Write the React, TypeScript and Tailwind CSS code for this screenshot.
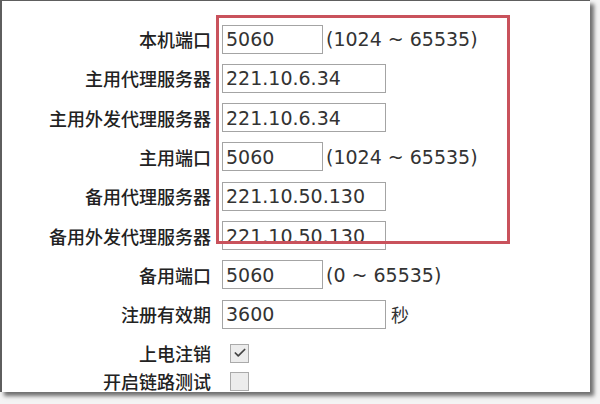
import { Check } from 'lucide-react';

type Row = {
  label: string;
  value?: string;
  wide?: boolean;
  hint?: string;
  checkbox?: boolean;
  checked?: boolean;
};

const rows: Row[] = [
  { label: '本机端口', value: '5060', hint: '(1024 ~ 65535)' },
  { label: '主用代理服务器', value: '221.10.6.34', wide: true },
  { label: '主用外发代理服务器', value: '221.10.6.34', wide: true },
  { label: '主用端口', value: '5060', hint: '(1024 ~ 65535)' },
  { label: '备用代理服务器', value: '221.10.50.130', wide: true },
  { label: '备用外发代理服务器', value: '221.10.50.130', wide: true },
  { label: '备用端口', value: '5060', hint: '(0 ~ 65535)' },
  { label: '注册有效期', value: '3600', wide: true, hint: '秒' },
  { label: '上电注销', checkbox: true, checked: true },
  { label: '开启链路测试', checkbox: true },
];

/* ── one form line ── */
function FieldRow({ row, last }: { row: Row; last: boolean }) {
  return (
    <div className={`flex items-center ${last ? 'h-[16px]' : 'h-[39.3px]'}`}>
      <div className="w-[209px] shrink-0 text-right text-[18px] text-[#222] font-['Noto_Sans_CJK_SC',sans-serif] font-medium leading-none">
        {row.label}
      </div>
      <div className="ml-[11px] flex items-center">
        {row.checkbox ? (
          <span className="ml-[8px] w-[19px] h-[19px] border border-[#aaa] bg-[#ececec] flex items-center justify-center">
            {row.checked && <Check size={14} strokeWidth={3} className="text-[#444]" />}
          </span>
        ) : (
          <>
            <input
              readOnly
              value={row.value}
              className={`${row.wide ? 'w-[164px]' : 'w-[101px]'} h-[29px] border border-[#a4a4a4] bg-white pl-[3px] text-[19px] text-[#333] font-['DejaVu_Sans',sans-serif] outline-none`}
            />
            {row.hint && (
              <span
                className={`${row.value === '3600' ? 'ml-[5px] text-[18px] font-["Noto_Sans_CJK_SC",sans-serif]' : 'ml-[3px] text-[19px] font-["DejaVu_Sans",sans-serif]'} text-[#333] whitespace-nowrap`}
              >
                {row.hint}
              </span>
            )}
          </>
        )}
      </div>
    </div>
  );
}

export default function App() {
  return (
    <div className="w-[600px] h-[404px] bg-[#f4f4f4] overflow-hidden">
      <div className="relative w-[590px] h-[392px] bg-white border-l-2 border-t border-[#5e5e5e] shadow-[4px_4px_4px_rgba(0,0,0,0.55)] overflow-hidden">
        <div className="pt-[18.4px]">
          {rows.map((r, i) => (
            <FieldRow key={r.label} row={r} last={i === rows.length - 1} />
          ))}
        </div>
        {/* red highlight box */}
        <div className="absolute left-[214px] top-[14px] w-[294px] h-[229px] border-[3px] border-[#c9525c] pointer-events-none" />
      </div>
    </div>
  );
}
